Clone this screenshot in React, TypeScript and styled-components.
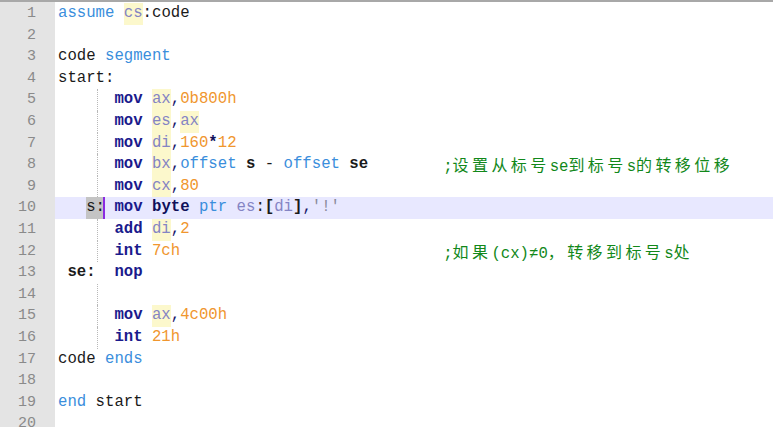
import React from "react";
import styled, {createGlobalStyle} from "styled-components";

type Kind = "dir" | "ins" | "reg" | "num" | "txt" | "op" | "str" | "brk" | "lbl" | "sel" | "kw" | "plain";
type Tok = [string, Kind];

interface Line {
    toks: Tok[];
    comment?: string;
    guide?: boolean;
    current?: boolean;
}

const sp: Tok = [" ", "txt"];
const ind: Tok = ["      ", "txt"];

const lines: Line[] = [
    {toks: [["assume", "dir"], sp, ["cs", "reg"], [":", "txt"], ["code", "txt"]]},
    {toks: []},
    {toks: [["code", "txt"], sp, ["segment", "dir"]]},
    {toks: [["start:", "txt"]]},
    {guide: true, toks: [ind, ["mov", "ins"], sp, ["ax", "reg"], [",", "op"], ["0b800h", "num"]]},
    {guide: true, toks: [ind, ["mov", "ins"], sp, ["es", "reg"], [",", "op"], ["ax", "reg"]]},
    {guide: true, toks: [ind, ["mov", "ins"], sp, ["di", "reg"], [",", "op"], ["160", "num"], ["*", "kw"], ["12", "num"]]},
    {
        guide: true,
        toks: [ind, ["mov", "ins"], sp, ["bx", "reg"], [",", "op"], ["offset", "dir"], sp, ["s", "lbl"], [" - ", "txt"], ["offset", "dir"], sp, ["se", "lbl"]],
        comment: ";设置从标号se到标号s的转移位移",
    },
    {guide: true, toks: [ind, ["mov", "ins"], sp, ["cx", "reg"], [",", "op"], ["80", "num"]]},
    {
        current: true,
        toks: [["   ", "txt"], ["s:", "sel"], sp, ["mov", "ins"], sp, ["byte", "kw"], sp, ["ptr", "dir"], sp, ["es", "plain"], [":", "txt"], ["[", "brk"], ["di", "plain"], ["]", "brk"], [",", "op"], ["'!'", "str"]],
    },
    {guide: true, toks: [ind, ["add", "ins"], sp, ["di", "reg"], [",", "op"], ["2", "num"]]},
    {guide: true, toks: [ind, ["int", "ins"], sp, ["7ch", "num"]], comment: ";如果(cx)≠0，转移到标号s处"},
    {toks: [[" se:", "lbl"], ["  ", "txt"], ["nop", "ins"]]},
    {guide: true, toks: []},
    {guide: true, toks: [ind, ["mov", "ins"], sp, ["ax", "reg"], [",", "op"], ["4c00h", "num"]]},
    {guide: true, toks: [ind, ["int", "ins"], sp, ["21h", "num"]]},
    {toks: [["code", "txt"], sp, ["ends", "dir"]]},
    {toks: []},
    {toks: [["end", "dir"], sp, ["start", "txt"]]},
    {toks: []},
];

const GlobalStyle = createGlobalStyle`
  html, body {
    margin: 0;
    padding: 0;
    background: #ffffff;
    overflow: hidden;
  }
`;

const Editor = styled.div`
  width: 773px;
  height: 427px;
  border-top: 2px solid #a8a8a8;
  padding-top: 1px;
  box-sizing: border-box;
  overflow: hidden;
  display: flex;
  flex-direction: column;
  background: linear-gradient(to right, #e4e4e4 55px, #ffffff 55px);
  font-family: "Liberation Mono", "Noto Sans CJK SC", monospace;
  font-size: 15.67px;
`;

const Row = styled.div<{ $current?: boolean }>`
  display: flex;
  height: 21.6px;
  line-height: 21.6px;
  flex-shrink: 0;
  background: ${p => (p.$current ? "#e8e8ff" : "#ffffff")};
`;

const Gutter = styled.div`
  width: 55px;
  flex-shrink: 0;
  background: #e4e4e4;
  color: #8a8a8a;
  font-size: 15px;
  box-sizing: border-box;
  padding-right: 19px;
  text-align: right;
`;

const Code = styled.div<{ $guide?: boolean }>`
  position: relative;
  flex: 1;
  display: flex;
  padding-left: 3px;
  white-space: pre;

  &::before {
    content: "";
    display: ${p => (p.$guide ? "block" : "none")};
    position: absolute;
    left: 42px;
    top: 0;
    bottom: 0;
    border-left: 1px dotted #b8b8b8;
  }
`;

const Stmt = styled.span`
  position: relative;
  min-width: 41ch;
`;

const colours: Record<Kind, string> = {
    dir: "#3a8edc",
    ins: "#1a1a8c",
    reg: "#8484c4",
    num: "#f0962e",
    txt: "#1a1a1a",
    op: "#1a1a6a",
    str: "#8a8a9a",
    brk: "#1a1a1a",
    lbl: "#1a1a1a",
    sel: "#1a1a1a",
    kw: "#10105a",
    plain: "#8484c4",
};

const Tk = styled.span<{ $kind: Kind }>`
  color: ${p => colours[p.$kind]};
  font-weight: ${p => (["ins", "kw", "brk", "lbl"].includes(p.$kind) ? "bold" : "normal")};
  background: ${p => (p.$kind === "reg" ? "#fcf8cc" : p.$kind === "sel" ? "#c4c4c4" : "transparent")};
  display: inline-block;
  height: 21.6px;
  ${p => p.$kind === "sel" && "box-shadow: inset -2px 0 0 #8a2be2;"}
`;

const Comment = styled.span`
  color: #12881a;
  font-family: "Liberation Mono", "Noto Sans CJK SC", monospace;
`;

const Han = styled.span`
  font-family: "Noto Sans CJK SC", sans-serif;
  font-size: 16px;
  letter-spacing: 3.4px;
`;

const Ascii = styled.span`
  font-size: 15.67px;
`;

const renderComment = (text: string) => {
    const parts = text.match(/[\u3000-\u9fff\uff00-\uffef]+|[^\u3000-\u9fff\uff00-\uffef]+/g) || [];
    return parts.map((part, i) =>
        /[\u3000-\u9fff\uff00-\uffef]/.test(part) ? <Han key={i}>{part}</Han> : <Ascii key={i}>{part}</Ascii>
    );
};

export default function App() {
    return (
        <>
            <GlobalStyle/>
            <Editor>
                {lines.map((line, i) => (
                    <Row key={i} $current={line.current}>
                        <Gutter>{i + 1}</Gutter>
                        <Code $guide={line.guide}>
                            <Stmt>
                                {line.toks.map(([t, k], j) => (
                                    <Tk key={j} $kind={k}>{t}</Tk>
                                ))}
                            </Stmt>
                            {line.comment && <Comment>{renderComment(line.comment)}</Comment>}
                        </Code>
                    </Row>
                ))}
            </Editor>
        </>
    );
}
